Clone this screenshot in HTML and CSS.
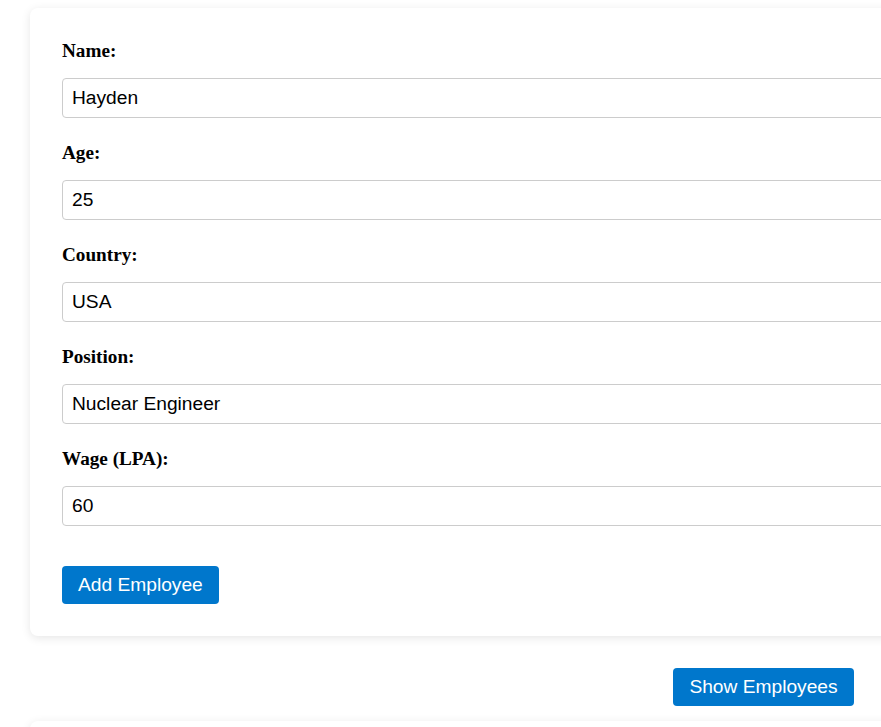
FILE: index.html
```html
<!DOCTYPE html>
<html>
<head>
<meta charset="utf-8">
<link rel="stylesheet" href="styles.css">
</head>
<body>
<main class="page">
  <form class="card">
    <div class="field">
      <label class="label">Name:</label>
      <input class="input" type="text" value="Hayden">
    </div>
    <div class="field">
      <label class="label">Age:</label>
      <input class="input" type="text" value="25">
    </div>
    <div class="field">
      <label class="label">Country:</label>
      <input class="input" type="text" value="USA">
    </div>
    <div class="field">
      <label class="label">Position:</label>
      <input class="input" type="text" value="Nuclear Engineer">
    </div>
    <div class="field">
      <label class="label">Wage (LPA):</label>
      <input class="input" type="text" value="60">
    </div>
    <button type="button" class="btn add">Add Employee</button>
  </form>
  <div class="actions">
    <button type="button" class="btn">Show Employees</button>
  </div>
  <section class="card list"></section>
</main>
</body>
</html>
```
FILE: styles.css
```css
html, body {
  margin: 0;
  padding: 0;
  background: #ffffff;
  overflow: hidden;
}
.page {
  width: 1467px;
  padding: 8px 0 0 30px;
  font-family: "Liberation Serif", "Times New Roman", serif;
}
.card {
  display: block;
  background: #ffffff;
  border-radius: 8px;
  box-shadow: 0 2px 10px rgba(0, 0, 0, 0.1);
  padding: 32px 32px 32px 32px;
}
.field {
  display: flex;
  flex-direction: column;
  margin-bottom: 24px;
}
.label {
  font-size: 19.2px;
  line-height: 22px;
  font-weight: bold;
  color: #000;
  margin-bottom: 16px;
}
.input {
  box-sizing: border-box;
  height: 40px;
  border: 1px solid #cccccc;
  border-radius: 4px;
  padding: 0 9px;
  font-family: "Liberation Sans", Arial, sans-serif;
  font-size: 19.2px;
  color: #000;
  background: #fff;
  outline: none;
}
.btn {
  font-family: "Liberation Sans", Arial, sans-serif;
  font-size: 19.2px;
  line-height: 22px;
  color: #ffffff;
  background: #0077cc;
  border: none;
  border-radius: 4px;
  padding: 8px 16px;
  cursor: pointer;
}
.add {
  margin-top: 16px;
}
.actions {
  display: flex;
  justify-content: center;
  margin: 32px 0 15px;
}
.list {
  height: 200px;
  padding: 0;
}
```
